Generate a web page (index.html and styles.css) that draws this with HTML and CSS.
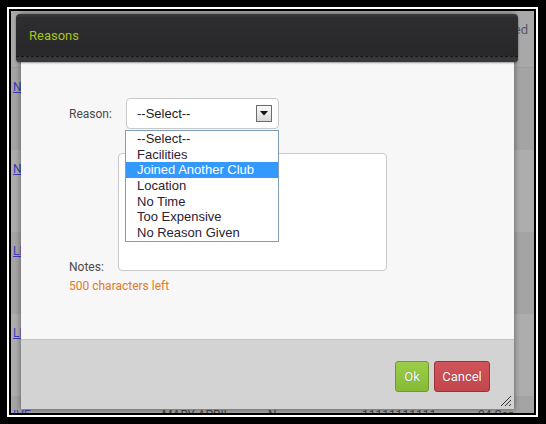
FILE: index.html
```html
<!DOCTYPE html>
<html>
<head>
<meta charset="utf-8">
<link rel="stylesheet" href="styles.css">
</head>
<body>
<div class="frame">
  <div class="screen">
    <div class="page">
      <div class="row head"><span class="hcell">Joined</span></div>
      <div class="row odd"><a class="lnk">NAME</a><span>JOHN PAUL</span><span>N</span><span>22222222222</span><span>1 Jan</span></div>
      <div class="row even"><a class="lnk">NAME</a><span>SUSAN</span><span>N</span><span>33333333333</span><span>8 Feb</span></div>
      <div class="row odd"><a class="lnk">LEE</a><span>PETER</span><span>N</span><span>44444444444</span><span>2 Mar</span></div>
      <div class="row even"><a class="lnk">LEE</a><span>ANNE</span><span>N</span><span>55555555555</span><span>3 Jul</span></div>
      <div class="row odd"><a class="lnk">IVE</a><span>MARY APRIL</span><span>N</span><span>11111111111</span><span>04 Sep</span></div>
    </div>

    <div class="modal">
      <div class="modal-head"><span class="modal-title">Reasons</span></div>
      <div class="modal-body">
        <div class="field reason-field">
          <label class="lbl reason-lbl">Reason:</label>
          <div class="select-wrap">
            <div class="select-box">
              <span class="select-text">--Select--</span>
              <span class="select-arrow"><svg width="8" height="5" viewBox="0 0 8 5"><path d="M0 0H8L4 4.5Z" fill="#111"/></svg></span>
            </div>
            <ul class="options">
              <li>--Select--</li>
              <li>Facilities</li>
              <li class="hl">Joined Another Club</li>
              <li>Location</li>
              <li>No Time</li>
              <li>Too Expensive</li>
              <li>No Reason Given</li>
            </ul>
          </div>
        </div>
        <div class="field notes-field">
          <label class="lbl notes-lbl">Notes:</label>
          <textarea class="notes"></textarea>
        </div>
        <div class="counter">500 characters left</div>
      </div>
      <div class="modal-foot">
        <button class="btn ok">Ok</button>
        <button class="btn cancel">Cancel</button>
        <svg class="grip" width="12" height="12" viewBox="0 0 12 12"><path d="M11 1L1 11M11 5L5 11M11 9L9 11" stroke="#333" stroke-width="1"/></svg>
      </div>
    </div>
  </div>
</div>
</body>
</html>
```
FILE: styles.css
```css
* { box-sizing: border-box; }
html, body { margin: 0; height: 100%; }
body {
  background: #000;
  padding: 7px 8px 7px 7px;
  font-family: Roboto, "Liberation Sans", sans-serif;
}
.frame {
  height: 100%;
  border: 2px solid #fff;
}
.screen {
  height: 100%;
  border: 2px solid #000;
  position: relative;
  overflow: hidden;
  background: #a9a9a9;
}
.page {
  display: flex;
  flex-direction: column;
}
.row {
  height: 82px;
  display: grid;
  grid-template-columns: 151px 106px 94px 116px 1fr;
  padding-top: 12px;
  font-size: 12px;
  line-height: 14px;
  color: #444;
}
.row.head {
  height: 57px;
  display: flex;
  justify-content: flex-end;
  padding: 12px 6px 0 0;
  color: #5a5766;
  font-size: 13px;
  border-bottom: 1px solid #9c9c9c;
  background: #a8a8a8;
}
.row.odd { background: #a4a4a4; }
.row.even { background: #adadad; }
.lnk {
  color: #3b3bb8;
  text-decoration: underline;
  margin-left: 2px;
}
.modal {
  position: absolute;
  left: 10px;
  top: 3px;
  width: 493px;
  box-shadow: 0 0 5px 1px rgba(0,0,0,0.35);
}
.modal-head {
  margin: 0 -4px 0 -5px;
  height: 48px;
  border-radius: 4px;
  background: linear-gradient(#38383b 0, #38383b 2px, #2e2e31 3px, #28282b 40px);
  position: relative;
  display: flex;
  align-items: center;
  padding: 0 0 6px 13px;
  box-shadow: 0 1px 2px rgba(0,0,0,0.4);
}
.modal-head::after {
  content: "";
  position: absolute;
  left: 0;
  right: 0;
  bottom: 0;
  height: 5px;
  border-top: 1px dashed #151515;
  background: #37373a;
  border-radius: 0 0 4px 4px;
}
.modal-title {
  color: #a4c51c;
  font-size: 13px;
}
.modal-body {
  height: 277px;
  background: #f7f7f7;
  padding: 36px 0 0 48px;
  color: #444;
  font-size: 12px;
}
.field { display: flex; }
.reason-field { align-items: center; height: 31px; }
.lbl { color: #4a4a4a; font-size: 12px; }
.reason-lbl { width: 57px; }
.select-wrap { position: relative; }
.select-box {
  width: 153px;
  height: 31px;
  border: 1px solid #c8c8c8;
  border-radius: 4px;
  background: #fff;
  display: flex;
  align-items: center;
  justify-content: space-between;
  padding: 0 6px 0 10px;
  font-family: "Liberation Sans", Arial, sans-serif;
  font-size: 13px;
  color: #222;
}
.select-arrow {
  width: 16px;
  height: 17px;
  border: 1px solid #6b6b6b;
  background: linear-gradient(#fafafa, #d8d8d8);
  display: flex;
  align-items: center;
  justify-content: center;
}
.options {
  position: absolute;
  z-index: 2;
  left: -1px;
  top: 32px;
  width: 154px;
  margin: 0;
  padding: 0;
  list-style: none;
  border: 1px solid #7f9db9;
  background: #fff;
  font-family: "Liberation Sans", Arial, sans-serif;
  font-size: 13px;
  color: #2b2233;
}
.options li {
  height: 15.7px;
  line-height: 15.7px;
  padding-left: 11px;
}
.options li.hl { background: #3399ff; color: #fff; }
.notes-field { margin-top: 24px; align-items: flex-end; }
.notes-lbl { width: 49px; margin-bottom: -3px; }
.notes {
  width: 269px;
  height: 118px;
  border: 1px solid #c8c8c8;
  border-radius: 4px;
  background: #fff;
  resize: none;
  margin: 0;
}
.counter {
  margin-top: 8px;
  color: #e07a2c;
  font-size: 12px;
  line-height: 14px;
}
.modal-foot {
  position: relative;
  height: 70px;
  background: #d3d3d3;
  border-top: 1px solid #c6c6c6;
  display: flex;
  justify-content: flex-end;
  align-items: flex-start;
  gap: 5px;
  padding: 21px 24px 0 0;
}
.btn {
  height: 31px;
  border-radius: 3px;
  font-family: Roboto, "Liberation Sans", sans-serif;
  font-size: 13px;
  color: #fff;
  text-shadow: 0 0 1px rgba(0,0,0,0.4);
  padding: 0;
  cursor: pointer;
}
.btn.ok {
  width: 34px;
  border: 1px solid #6f9a2c;
  background: linear-gradient(#9ccd4a, #86bb36);
}
.btn.cancel {
  width: 56px;
  border: 1px solid #9b3237;
  background: linear-gradient(#d0545a, #c2464c);
}
.grip {
  position: absolute;
  right: 2px;
  bottom: 2px;
}
```
